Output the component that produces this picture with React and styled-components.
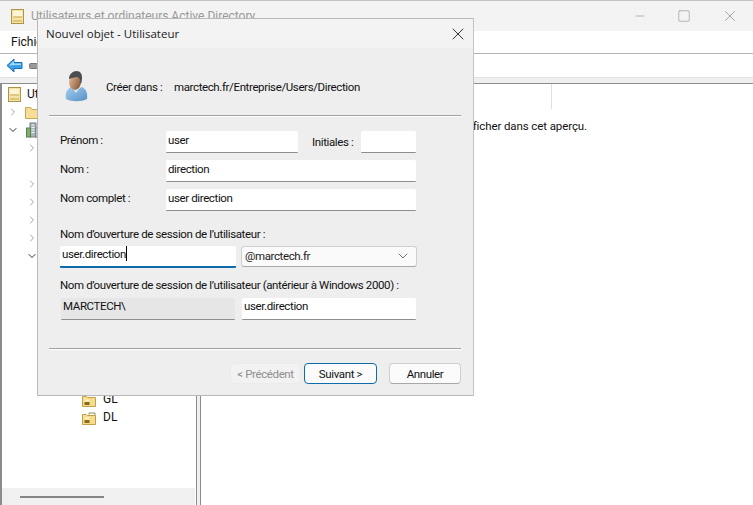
import React from 'react'
import styled, { createGlobalStyle } from 'styled-components'
import { ChevronRight, ChevronDown, X, Minus, Square } from 'lucide-react'

const GlobalStyle = createGlobalStyle`
  html, body {
    margin: 0;
    padding: 0;
  }
  body {
    width: 753px;
    height: 505px;
    overflow: hidden;
    font-family: Roboto, "Liberation Sans", sans-serif;
    font-size: 11.5px;
    color: #111;
    background: #fff;
  }
`

const Screen = styled.div`
  position: relative;
  width: 753px;
  height: 505px;
  overflow: hidden;
  display: flex;
  flex-direction: column;
  border-top: 1px solid #c4c4c4;
  box-sizing: border-box;
`

const TitleBar = styled.div`
  height: 30px;
  flex: none;
  display: flex;
  align-items: center;
  padding-left: 11px;
  gap: 7px;
  background: #f3f3f3;
  color: #9a9a9a;
  font-size: 12px;
`

const WindowButtons = styled.div`
  margin-left: auto;
  display: flex;
  align-items: center;
  gap: 30px;
  padding-right: 14px;
  color: #8c8c8c;
`

const MenuBar = styled.div`
  height: 22px;
  flex: none;
  display: flex;
  align-items: center;
  padding-left: 11px;
  background: #fff;
  border-bottom: 1px solid #b4b4b4;
  font-size: 12px;
`

const ToolBar = styled.div`
  height: 23px;
  flex: none;
  display: flex;
  align-items: center;
  gap: 6px;
  padding-left: 6px;
  background: #fff;
`

const Band = styled.div`
  height: 6px;
  flex: none;
  background: #f0f0f0;
  border-top: 1px solid #e2e2e2;
  box-sizing: border-box;
`

const Panels = styled.div`
  flex: 1;
  display: flex;
  gap: 3px;
  min-height: 0;
  background: #f0f0f0;
`

const TreePanel = styled.div`
  width: 197px;
  flex: none;
  box-sizing: border-box;
  display: flex;
  flex-direction: column;
  background: #fff;
  border: 1px solid #8c8c8c;
  border-width: 1px 1px 0 2px;
  font-size: 12px;
`

const TreeList = styled.div`
  flex: 1;
  padding-top: 1px;
`

const TreeRow = styled.div`
  height: 18px;
  display: flex;
  align-items: center;
  padding-left: ${p => p.$indent}px;
  gap: ${p => p.$gap || 0}px;
  white-space: nowrap;
`

const TreeLabel = styled.span`
  padding-bottom: 2px;
`

const Chevron = styled.span`
  width: 12px;
  flex: none;
  display: flex;
  justify-content: center;
  color: ${p => (p.$open ? '#333' : '#7c7c7c')};
`

const ScrollTrack = styled.div`
  height: 17px;
  flex: none;
  margin-right: 1px;
  display: flex;
  align-items: center;
  padding-left: 18px;
  background: #f0f0f0;
`

const ScrollThumb = styled.div`
  width: 84px;
  height: 2px;
  background: #858585;
`

const ListPanel = styled.div`
  flex: 1;
  background: #fff;
  border: 1px solid #8c8c8c;
  border-width: 1px 0 0 1px;
`

const ListHeader = styled.div`
  height: 25px;
  display: flex;
  justify-content: flex-end;
  padding-right: 201px;
`

const HeaderDivider = styled.div`
  width: 1px;
  background: #e0e0e0;
`

const EmptyText = styled.div`
  margin-top: 10px;
  text-align: right;
  padding-right: 166px;
  white-space: nowrap;
  letter-spacing: -0.1px;
`

const Dialog = styled.div`
  position: absolute;
  left: 37px;
  top: 17px;
  width: 437px;
  height: 378px;
  box-sizing: border-box;
  display: flex;
  flex-direction: column;
  background: #eeeeee;
  border: 1px solid #b9b9b9;
  border-right-color: #c4c4c4;
`

const DialogTitle = styled.div`
  height: 29px;
  flex: none;
  display: flex;
  align-items: center;
  justify-content: space-between;
  padding: 0 5px 0 8px;
  background: #f3f3f3;
  color: #1a1a1a;
  font-family: "Open Sans", sans-serif;
  font-size: 11.5px;
`

const DialogBody = styled.div`
  flex: 1;
  padding: 2px 12px 0 11px;
  display: flex;
  flex-direction: column;
  letter-spacing: -0.38px;
`

const CreateRow = styled.div`
  height: 65px;
  flex: none;
  display: flex;
  align-items: center;
  padding-left: 16px;
  padding-top: 9px;
  box-sizing: border-box;
`

const CreateLabel = styled.span`
  width: 68px;
  margin-left: 18px;
  flex: none;
`

const Separator = styled.div`
  height: 1px;
  flex: none;
  background: #a0a0a0;
  box-shadow: 0 1px 0 #fff;
`

const FieldGrid = styled.div`
  margin-top: 15px;
  padding-left: 11px;
  display: grid;
  grid-template-columns: 106px 132px 63px 55px;
  grid-auto-rows: 22px;
  row-gap: 7px;
  align-items: center;
`

const FieldLabel = styled.label`
  padding-left: ${p => p.$inset || 0}px;
  padding-bottom: ${p => (p.$inset ? 0 : 4)}px;
  white-space: nowrap;
`

const Input = styled.div`
  height: 22px;
  box-sizing: border-box;
  display: flex;
  align-items: center;
  padding-left: 2px;
  padding-bottom: 3px;
  background: ${p => (p.$disabled ? '#e6e6e6' : '#fff')};
  border-bottom: 1px solid #8e8e8e;
  border-radius: 2px 2px 1px 1px;
  white-space: nowrap;
  grid-column: ${p => p.$span || 'auto'};
`

const LogonBlock = styled.div`
  margin-top: 15px;
  padding-left: 11px;
`

const BlockLabel = styled.div`
  height: 16px;
  line-height: 16px;
  white-space: nowrap;
  margin-top: ${p => p.$top || 0}px;
`

const LogonRow = styled.div`
  display: flex;
  gap: ${p => p.$gap}px;
  margin-top: ${p => p.$top}px;
  padding-left: ${p => p.$inset || 0}px;
`

const LogonCell = styled(Input)`
  width: ${p => p.$width}px;
  flex: none;
  padding-bottom: 5px;
`

const FocusedCell = styled(LogonCell)`
  border-bottom: 2px solid #0f6cab;
`

const Caret = styled.span`
  width: 1px;
  height: 15px;
  background: #000;
`

const Select = styled.div`
  width: 176px;
  height: 21px;
  flex: none;
  box-sizing: border-box;
  display: flex;
  align-items: center;
  justify-content: space-between;
  padding: 0 5px 1px 3px;
  background: #fafafa;
  border: 1px solid #d0d0d0;
  border-bottom-color: #a8a8a8;
  border-radius: 3px;
  color: #1a1a1a;
`

const BottomSeparator = styled(Separator)`
  margin-top: 28px;
`

const ButtonRow = styled.div`
  margin-top: 14px;
  display: flex;
  justify-content: flex-end;
`

const Button = styled.button`
  width: ${p => p.$width}px;
  height: 21px;
  margin-left: ${p => p.$gap || 0}px;
  box-sizing: border-box;
  padding: 0;
  font: inherit;
  letter-spacing: inherit;
  background: ${p => (p.disabled ? '#f2f2f2' : '#fbfbfb')};
  color: ${p => (p.disabled ? '#8f8f8f' : '#111')};
  border: 1px solid ${p => (p.disabled ? '#ebebeb' : p.$primary ? '#0f6cab' : '#cfcfcf')};
  border-bottom-color: ${p => (p.disabled ? '#ebebeb' : p.$primary ? '#0f6cab' : '#a8a8a8')};
  border-radius: 4px;
`

const BookIcon = () => (
  <svg width="13" height="15" viewBox="0 0 13 15">
    <rect x="0.5" y="0.5" width="12" height="14" fill="#f3e3a6" stroke="#ad9548" />
    <rect x="2" y="2" width="9" height="5" fill="#fbf5d6" />
    <path d="M2 8h9" stroke="#c9ae5e" />
    <rect x="2" y="11" width="9" height="2" fill="#e0c673" />
  </svg>
)

const BackIcon = () => (
  <svg width="17" height="15" viewBox="0 0 17 15">
    <path d="M1 7.500 8 1v3.500h8v6H8V14z" fill="#3ba1e6" stroke="#1a6fb5" strokeWidth="1" />
    <path d="M3 7.500 8 3v2.500h7V7H8z" fill="#a3dcfa" />
  </svg>
)

const ForwardStub = () => (
  <svg width="9" height="8" viewBox="0 0 9 8">
    <rect x="0.5" y="1.500" width="8" height="5" rx="1" fill="#9a9a9a" stroke="#777" />
  </svg>
)

const FolderIcon = () => (
  <svg width="15" height="13" viewBox="0 0 15 13">
    <path d="M.5 12.500v-11h5l1.500 2h7.500v9z" fill="#f7dd96" stroke="#c9a74f" />
  </svg>
)

const BuildingIcon = () => (
  <svg width="14" height="16" viewBox="0 0 14 16">
    <rect x="4" y="1" width="6" height="14" fill="#a9b6b9" stroke="#6f7f80" />
    <rect x="0.5" y="6" width="4" height="9" fill="#7fae6d" stroke="#5d7f58" />
    <rect x="9.500" y="6" width="4" height="9" fill="#b9c4c6" stroke="#7a8788" />
    <path d="M5.500 3h3M5.500 5.500h3M5.500 8h3M5.500 10.500h3" stroke="#eef4f5" />
  </svg>
)

const OuIcon = ({ tab }) => (
  <svg width="14" height="13" viewBox="0 0 14 13">
    {tab && <path d="M7 2.500V1h6v2" fill="#fff" stroke="#9a8a60" />}
    <path d="M.5 12.500v-10h4l1 1h8v9z" fill="#f6dc8f" stroke="#c39f45" />
    <rect x="2.500" y="5.500" width="5" height="2" fill="#fff4c2" />
    <rect x="2.500" y="8" width="5" height="3" fill="#8a6a1c" />
  </svg>
)

const UserIcon = () => (
  <svg width="23" height="32" viewBox="0 0 23 32">
    <defs>
      <linearGradient id="skin" x1="0" y1="0" x2="1" y2="0.6">
        <stop offset="0" stopColor="#ecc6a4" />
        <stop offset="1" stopColor="#8e5e3e" />
      </linearGradient>
      <linearGradient id="shirt" x1="0" y1="0" x2="1" y2="1">
        <stop offset="0" stopColor="#a6cdec" />
        <stop offset="1" stopColor="#5590c6" />
      </linearGradient>
    </defs>
    <path d="M1 28c-1-6 1-10 5-12l5 3 6-3c4 2 6 6 5 12-6 3-15 3-21 0z" fill="url(#shirt)" />
    <path d="M6.500 16l4.500 6 4.500-6-4.500 1.500z" fill="#dce9f3" />
    <ellipse cx="10" cy="10.500" rx="6" ry="8.500" fill="url(#skin)" />
    <path d="M4 8C4 3 8 0 11.500 0c4 0 6 3 5.500 8l-.7 4.500-1-.5c.3-3-.8-5.500-2.800-6C10 6.500 6.500 6.500 4 8z" fill="#4a4e50" />
  </svg>
)

const chevronRight = <ChevronRight size={18} strokeWidth={1.4} />
const chevronDown = <ChevronDown size={18} strokeWidth={2} />

export default function App() {
  return (
    <Screen>
      <GlobalStyle />
      <TitleBar>
        <BookIcon />
        <span>Utilisateurs et ordinateurs Active Directory</span>
        <WindowButtons>
          <Minus size={14} strokeWidth={1} />
          <Square size={14} strokeWidth={1} />
          <X size={18} strokeWidth={1} />
        </WindowButtons>
      </TitleBar>
      <MenuBar>Fichier</MenuBar>
      <ToolBar>
        <BackIcon />
        <ForwardStub />
      </ToolBar>
      <Band />
      <Panels>
        <TreePanel>
          <TreeList>
            <TreeRow $indent={6} $gap={6}><BookIcon /><span>Utilisateurs et ordinateurs</span></TreeRow>
            <TreeRow $indent={5} $gap={6}><Chevron>{chevronRight}</Chevron><FolderIcon /></TreeRow>
            <TreeRow $indent={5} $gap={7}><Chevron $open>{chevronDown}</Chevron><BuildingIcon /></TreeRow>
            <TreeRow $indent={24}><Chevron>{chevronRight}</Chevron></TreeRow>
            <TreeRow $indent={24} />
            <TreeRow $indent={24}><Chevron>{chevronRight}</Chevron></TreeRow>
            <TreeRow $indent={24}><Chevron>{chevronRight}</Chevron></TreeRow>
            <TreeRow $indent={24}><Chevron>{chevronRight}</Chevron></TreeRow>
            <TreeRow $indent={24}><Chevron>{chevronRight}</Chevron></TreeRow>
            <TreeRow $indent={24}><Chevron $open>{chevronDown}</Chevron></TreeRow>
            {[...Array(7)].map((_, i) => <TreeRow key={i} $indent={24} />)}
            <TreeRow $indent={80} $gap={7}><OuIcon /><TreeLabel>GL</TreeLabel></TreeRow>
            <TreeRow $indent={80} $gap={7}><OuIcon tab /><TreeLabel>DL</TreeLabel></TreeRow>
          </TreeList>
          <ScrollTrack><ScrollThumb /></ScrollTrack>
        </TreePanel>
        <ListPanel>
          <ListHeader><HeaderDivider /></ListHeader>
          <EmptyText>Aucun élément à afficher dans cet aperçu.</EmptyText>
        </ListPanel>
      </Panels>

      <Dialog>
        <DialogTitle>
          <span>Nouvel objet - Utilisateur</span>
          <X size={20} strokeWidth={1.1} color="#222" />
        </DialogTitle>
        <DialogBody>
          <CreateRow>
            <UserIcon />
            <CreateLabel>Créer dans :</CreateLabel>
            <span>marctech.fr/Entreprise/Users/Direction</span>
          </CreateRow>
          <Separator />
          <FieldGrid>
            <FieldLabel>Prénom :</FieldLabel>
            <Input>user</Input>
            <FieldLabel $inset={14}>Initiales :</FieldLabel>
            <Input />
            <FieldLabel>Nom :</FieldLabel>
            <Input $span="span 3">direction</Input>
            <FieldLabel>Nom complet :</FieldLabel>
            <Input $span="span 3">user direction</Input>
          </FieldGrid>
          <LogonBlock>
            <BlockLabel>Nom d’ouverture de session de l’utilisateur :</BlockLabel>
            <LogonRow $gap={5} $top={4}>
              <FocusedCell $width={176}>user.direction<Caret /></FocusedCell>
              <Select>
                <span>@marctech.fr</span>
                <ChevronDown size={16} strokeWidth={1.2} color="#555" />
              </Select>
            </LogonRow>
            <BlockLabel $top={9}>Nom d’ouverture de session de l’utilisateur (antérieur à Windows 2000) :</BlockLabel>
            <LogonRow $gap={7} $top={5} $inset={1}>
              <LogonCell $width={174} $disabled>MARCTECH\</LogonCell>
              <LogonCell $width={174}>user.direction</LogonCell>
            </LogonRow>
          </LogonBlock>
          <BottomSeparator />
          <ButtonRow>
            <Button disabled $width={71}>&lt; Précédent</Button>
            <Button $primary $gap={3} $width={73}>Suivant &gt;</Button>
            <Button $gap={12} $width={72}>Annuler</Button>
          </ButtonRow>
        </DialogBody>
      </Dialog>
    </Screen>
  )
}
